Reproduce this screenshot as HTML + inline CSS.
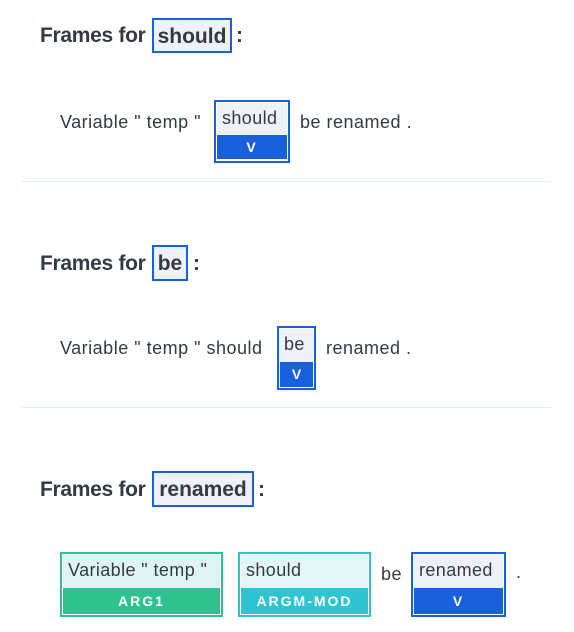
<!DOCTYPE html><html><head><style>
body{margin:0;width:574px;height:632px;background:#fff;font-family:"Liberation Sans",sans-serif;color:#333a44;position:relative;overflow:hidden}
.a{position:absolute;white-space:nowrap}
.t{font-size:21px;font-weight:bold;letter-spacing:-0.3px}
.hb{position:absolute;border:2px solid #1a5fdb;background:#eef2f7;box-sizing:border-box;font-size:21px;font-weight:bold;text-align:center;line-height:33px}
.s{font-size:18px;letter-spacing:0.5px}
.fb{position:absolute;border:2px solid #1a5fdb;box-sizing:border-box;background:#fff;padding:1px}
.fb .w{height:33px;line-height:31px;font-size:18px;letter-spacing:0.4px;background:#eef2f7;text-align:left;padding-left:5px}
.fb .l{height:26px;line-height:26px;color:#fff;font-weight:bold;font-size:14px;letter-spacing:2px;text-align:center;background:#1a5fdb}
.hr{position:absolute;left:22px;width:529px;height:1px;background:#dff0f0}
</style></head><body>
<div class="a t" style="left:40px;top:24px">Frames for</div>
<div class="hb" style="left:152px;top:18px;width:80px;height:35px">should</div>
<div class="a t" style="left:236px;top:24px">:</div>
<div class="a s" style="left:60px;top:112px">Variable " temp "</div>
<div class="fb" style="left:214px;top:100px;width:76px;height:63px"><div class="w" style="height:32px">should</div><div class="l" style="height:24px;line-height:24px">V</div></div>
<div class="a s" style="left:300px;top:112px">be renamed .</div>
<div class="hr" style="top:181px"></div>

<div class="a t" style="left:40px;top:252px">Frames for</div>
<div class="hb" style="left:152px;top:245px;width:36px;height:36px">be</div>
<div class="a t" style="left:193px;top:252px">:</div>
<div class="a s" style="left:60px;top:338px">Variable " temp " should</div>
<div class="fb" style="left:277px;top:326px;width:39px;height:64px"><div class="w" style="padding-left:4px">be</div><div class="l" style="height:25px;line-height:25px;letter-spacing:0">V</div></div>
<div class="a s" style="left:326px;top:338px">renamed .</div>
<div class="hr" style="top:407px"></div>

<div class="a t" style="left:40px;top:478px">Frames for</div>
<div class="hb" style="left:152px;top:471px;width:102px;height:36px">renamed</div>
<div class="a t" style="left:258px;top:478px">:</div>
<div class="fb" style="left:60px;top:552px;width:163px;height:65px;border-color:#2ec28e"><div class="w" style="background:#e0f5f3">Variable " temp "</div><div class="l" style="background:#2ec28e">ARG1</div></div>
<div class="fb" style="left:238px;top:552px;width:133px;height:65px;border-color:#2ec5d0"><div class="w" style="background:#e3f6f6">should</div><div class="l" style="background:#2ec5d0">ARGM-MOD</div></div>
<div class="a s" style="left:381px;top:564px">be</div>
<div class="fb" style="left:411px;top:552px;width:95px;height:65px"><div class="w">renamed</div><div class="l">V</div></div>
<div class="a s" style="left:516px;top:562px">.</div>
</body></html>
